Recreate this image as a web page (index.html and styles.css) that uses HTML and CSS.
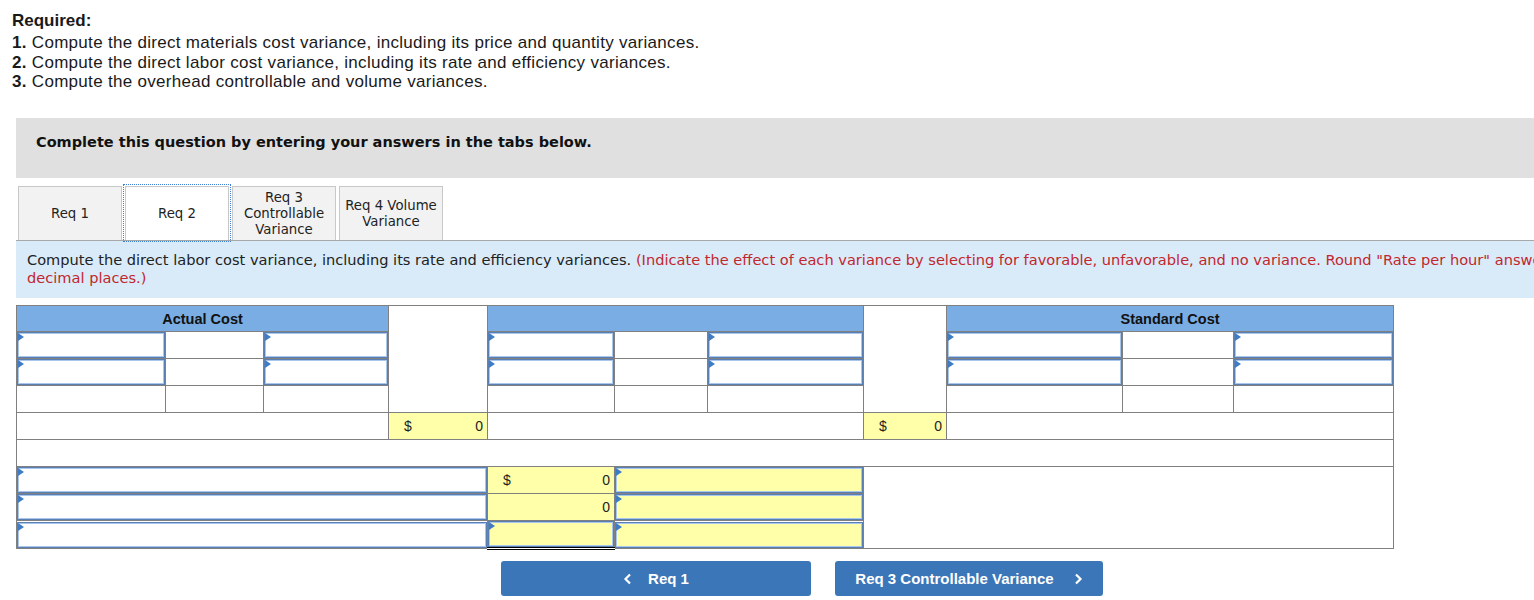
FILE: index.html
```html
<!DOCTYPE html>
<html>
<head>
<meta charset="utf-8">
<link rel="stylesheet" href="styles.css">
</head>
<body>
<div class="page">
  <div class="required">
    <div class="req-title">Required:</div>
    <div class="req-list">
      <div><b>1.</b> Compute the direct materials cost variance, including its price and quantity variances.</div>
      <div><b>2.</b> Compute the direct labor cost variance, including its rate and efficiency variances.</div>
      <div><b>3.</b> Compute the overhead controllable and volume variances.</div>
    </div>
  </div>

  <div class="wrap">
    <div class="band">Complete this question by entering your answers in the tabs below.</div>

    <div class="tabs">
      <div class="tab">Req 1</div>
      <div class="tab active">Req 2</div>
      <div class="tab">Req 3<br>Controllable<br>Variance</div>
      <div class="tab">Req 4 Volume<br>Variance</div>
    </div>

    <div class="instr">Compute the direct labor cost variance, including its rate and efficiency variances. <span class="red">(Indicate the effect of each variance by selecting for favorable, unfavorable, and no variance. Round "Rate per hour" answers to 2<br>decimal places.)</span></div>

    <table class="grid">
      <colgroup>
        <col style="width:149px"><col style="width:98px"><col style="width:125px"><col style="width:99px">
        <col style="width:127px"><col style="width:93px"><col style="width:156px"><col style="width:83px">
        <col style="width:176px"><col style="width:111px"><col style="width:160px">
      </colgroup>
      <tr class="hrow">
        <th colspan="3" class="hd">Actual Cost</th>
        <td rowspan="4" class="gap"></td>
        <th colspan="3" class="hd"></th>
        <td rowspan="4" class="gap"></td>
        <th colspan="3" class="hd">Standard Cost</th>
      </tr>
      <tr>
        <td class="ic"><div class="inp"></div></td>
        <td></td>
        <td class="ic"><div class="inp"></div></td>
        <td class="ic"><div class="inp"></div></td>
        <td></td>
        <td class="ic"><div class="inp"></div></td>
        <td class="ic"><div class="inp"></div></td>
        <td></td>
        <td class="ic"><div class="inp"></div></td>
      </tr>
      <tr>
        <td class="ic"><div class="inp"></div></td>
        <td></td>
        <td class="ic"><div class="inp"></div></td>
        <td class="ic"><div class="inp"></div></td>
        <td></td>
        <td class="ic"><div class="inp"></div></td>
        <td class="ic"><div class="inp"></div></td>
        <td></td>
        <td class="ic"><div class="inp"></div></td>
      </tr>
      <tr>
        <td></td><td class="total"></td><td></td>
        <td></td><td></td><td></td>
        <td></td><td></td><td></td>
      </tr>
      <tr>
        <td colspan="3"></td>
        <td class="yel"><div class="amt"><span>$</span><span>0</span></div></td>
        <td colspan="3"></td>
        <td class="yel"><div class="amt"><span>$</span><span>0</span></div></td>
        <td colspan="3"></td>
      </tr>
      <tr>
        <td colspan="11"></td>
      </tr>
      <tr>
        <td colspan="4" class="ic"><div class="inp"></div></td>
        <td class="yel"><div class="amt"><span>$</span><span>0</span></div></td>
        <td colspan="2" class="ic"><div class="inp y"></div></td>
        <td colspan="4" rowspan="3"></td>
      </tr>
      <tr>
        <td colspan="4" class="ic"><div class="inp"></div></td>
        <td class="yel"><div class="amt"><span></span><span>0</span></div></td>
        <td colspan="2" class="ic"><div class="inp y"></div></td>
      </tr>
      <tr>
        <td colspan="4" class="ic"><div class="inp"></div></td>
        <td class="ic dbl"><div class="inp y"></div></td>
        <td colspan="2" class="ic"><div class="inp y"></div></td>
      </tr>
    </table>

    <div class="nav">
      <div class="btn prev">
        <svg width="10" height="12" viewBox="0 0 10 12"><polyline points="7,1.5 2.5,6 7,10.5" fill="none" stroke="#fff" stroke-width="2.2"/></svg>
        <span>Req 1</span>
      </div>
      <div class="btn next">
        <span>Req 3 Controllable Variance</span>
        <svg width="10" height="12" viewBox="0 0 10 12"><polyline points="3,1.5 7.5,6 3,10.5" fill="none" stroke="#fff" stroke-width="2.2"/></svg>
      </div>
    </div>
  </div>
</div>
</body>
</html>
```

FILE: styles.css
```css
html, body {
  margin: 0;
  padding: 0;
  overflow: hidden;
  background: #fff;
}
.page {
  width: 1600px;
  color: #222;
}
.required {
  padding: 11px 0 0 12px;
  font-family: "Liberation Sans", Arial, sans-serif;
  font-size: 17px;
  letter-spacing: 0.3px;
  color: #1a1a1a;
}
.req-title {
  font-weight: bold;
  line-height: 20px;
  letter-spacing: 0;
}
.req-list {
  margin-top: 2px;
  line-height: 19.7px;
}
.wrap {
  margin: 26px 0 0 16px;
  width: 1572px;
}
.band {
  background: #e0e0e0;
  height: 60px;
  box-sizing: border-box;
  padding: 14px 0 0 20px;
  line-height: 20px;
  font-family: "DejaVu Sans", Verdana, sans-serif;
  font-weight: bold;
  font-size: 14.5px;
  color: #111;
}
.tabs {
  display: flex;
  margin: 8px 0 0 2px;
  height: 54px;
  gap: 3px;
}
.tab {
  width: 104px;
  box-sizing: border-box;
  border: 1px solid #c8c8c8;
  border-bottom: none;
  background: #f2f2f2;
  display: flex;
  align-items: center;
  justify-content: center;
  text-align: center;
  font-family: "DejaVu Sans", Verdana, sans-serif;
  font-size: 13.3px;
  line-height: 16px;
  color: #222;
}
.tab.active {
  background: #fff;
  outline: 1px dotted #3b7fd4;
  outline-offset: 1px;
  position: relative;
  z-index: 1;
}
.instr {
  background: #d9ebf9;
  border-top: 1px solid #a8a8a8;
  box-sizing: border-box;
  height: 58px;
  padding: 10px 0 0 11px;
  font-family: "DejaVu Sans", Verdana, sans-serif;
  font-size: 14.6px;
  line-height: 18px;
  color: #222;
  white-space: nowrap;
}
.red {
  color: #c1272d;
}
.grid {
  margin-top: 7px;
  border-collapse: collapse;
  table-layout: fixed;
  width: 1377px;
  font-family: "Liberation Sans", Arial, sans-serif;
  font-size: 14px;
  color: #222;
}
.grid td, .grid th {
  border: 1px solid #808080;
  padding: 0;
  height: 26px;
}
.grid .hrow th, .grid .hrow td {
  height: 25px;
}
.hd {
  background: #79ade3;
  font-weight: bold;
  font-size: 14.5px;
  text-align: center;
  color: #111;
}
.gap {
  background: #fff;
}
.total {
  border-top: 1px solid #000 !important;
}
.yel {
  background: #ffffaa;
}
.amt {
  display: flex;
  justify-content: space-between;
  padding: 0 4px 0 15px;
  line-height: 26px;
}
.ic {
  position: relative;
}
.inp {
  position: relative;
  box-sizing: border-box;
  height: 26px;
  border: 1px solid #5a7fb3;
  box-shadow: inset 0 0 0 1px #a9c6ec;
  background: #fff;
}
.inp.y {
  background: #ffffaa;
}
.inp::before {
  content: "";
  position: absolute;
  left: 0;
  top: 0;
  border-left: 6px solid #3f7cc6;
  border-top: 4px solid transparent;
  border-bottom: 4px solid transparent;
}
.dbl {
  border-bottom: 3px double #000 !important;
}
.nav {
  display: flex;
  justify-content: center;
  gap: 24px;
  margin-top: 11px;
}
.btn {
  height: 35px;
  box-sizing: border-box;
  background: #3b76b8;
  border-radius: 3px;
  color: #fff;
  font-family: "Liberation Sans", Arial, sans-serif;
  font-weight: bold;
  font-size: 15px;
  display: flex;
  align-items: center;
  justify-content: center;
  gap: 15px;
}
.btn.prev {
  width: 310px;
}
.btn.next {
  width: 268px;
  gap: 19px;
}
```
